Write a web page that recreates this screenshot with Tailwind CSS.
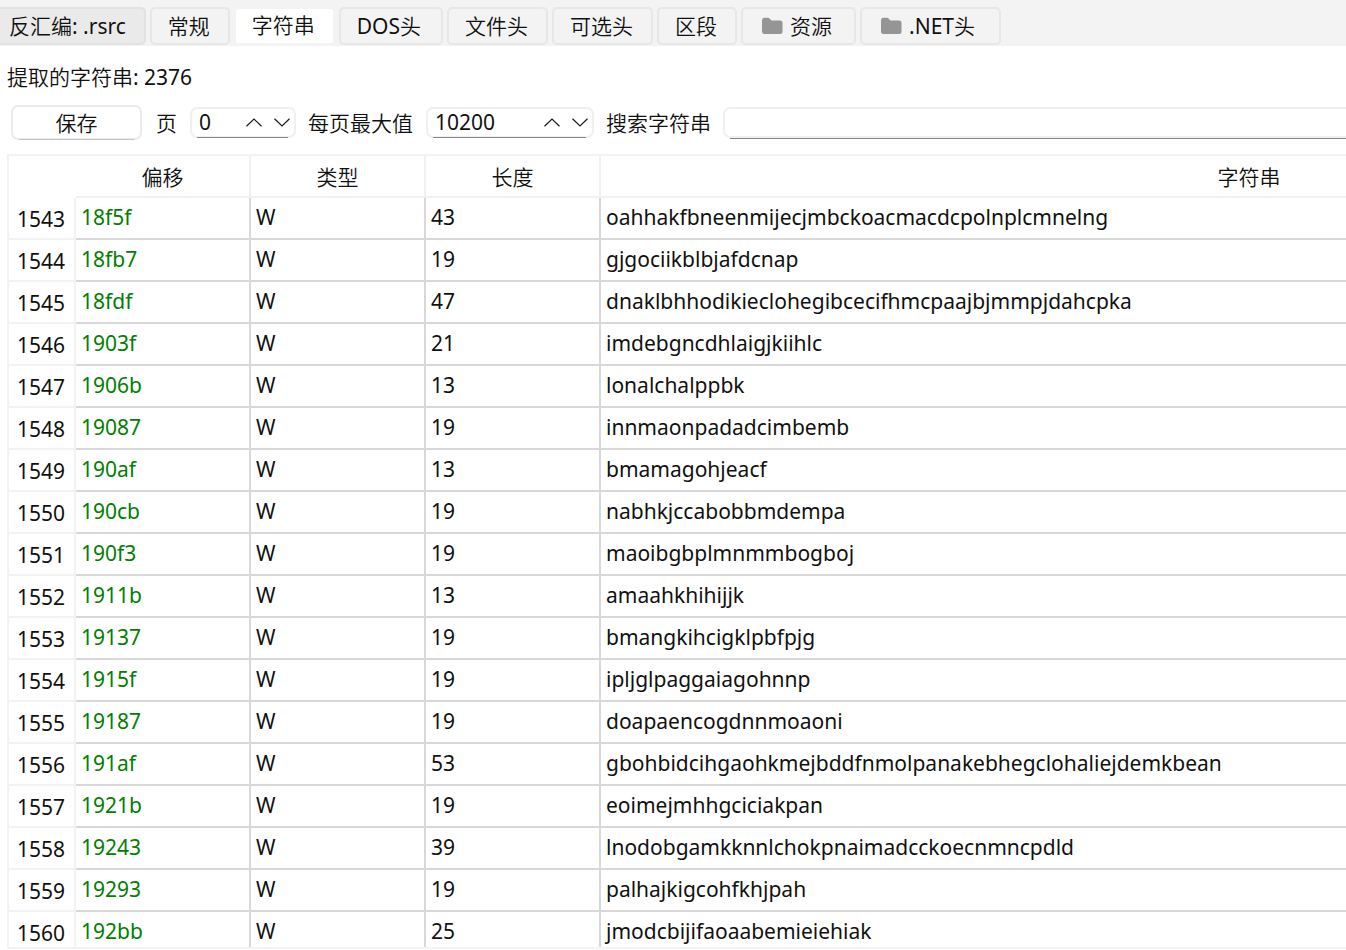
<!DOCTYPE html>
<html lang="zh-CN">
<head>
  <meta charset="UTF-8" />
  <meta name="viewport" content="width=device-width, initial-scale=1" />
  <title>字符串</title>
  <script src="https://cdn.jsdelivr.net/npm/@tailwindcss/browser@4"></script>
</head>
<body class="h-screen flex flex-col overflow-hidden bg-white text-[#111] text-[21px] leading-[30px] font-['Noto_Sans','Noto_Sans_CJK_SC',sans-serif]">

  <!-- Tabs -->
  <nav class="flex shrink-0 gap-1 bg-[#f3f3f3] pt-[7px] pb-px whitespace-nowrap">
    <button class="h-[38px] pl-[9px] pr-[18px] rounded-r-[5px] border-2 border-l-0 border-[#e2e2e2] bg-[#eaeaea]"><span class="font-[350]">反汇编</span>: .rsrc</button>
    <button class="h-[38px] pl-4 pr-[18px] rounded-[5px] border-2 border-[#e7e7e7] font-[350]">常规</button>
    <button class="h-[38px] pl-4 pr-[18px] pb-[2px] rounded-[5px] border-2 border-transparent bg-white bg-clip-padding font-[350]">字符串</button>
    <button class="h-[38px] pl-4 pr-5 rounded-[5px] border-2 border-[#e7e7e7]">DOS<span class="font-[350]">头</span></button>
    <button class="h-[38px] pl-4 pr-[18px] rounded-[5px] border-2 border-[#e7e7e7] font-[350]">文件头</button>
    <button class="h-[38px] pl-4 pr-[18px] rounded-[5px] border-2 border-[#e7e7e7] font-[350]">可选头</button>
    <button class="h-[38px] pl-4 pr-[18px] rounded-[5px] border-2 border-[#e7e7e7] font-[350]">区段</button>
    <button class="h-[38px] pl-[18px] pr-[22px] flex items-center gap-[7px] rounded-[5px] border-2 border-[#e7e7e7] font-[350]">
      <svg class="w-[22px] h-[18px]" viewBox="0 0 22 18" fill="#959595">
        <path d="M1 3.5Q1 0.800 3.500 0.800H6.500Q8 0.800 9 2L10.500 3.500H19Q21.500 3.500 21.500 6V14.500Q21.500 17 19 17H3.500Q1 17 1 14.500Z" />
      </svg>
      资源
    </button>
    <button class="h-[38px] pl-[18px] pr-6 flex items-center gap-[7px] rounded-[5px] border-2 border-[#e7e7e7]">
      <svg class="w-[22px] h-[18px]" viewBox="0 0 22 18" fill="#959595">
        <path d="M1 3.5Q1 0.800 3.500 0.800H6.500Q8 0.800 9 2L10.500 3.500H19Q21.500 3.500 21.500 6V14.500Q21.500 17 19 17H3.500Q1 17 1 14.500Z" />
      </svg>
      <span>.NET<span class="font-[350]">头</span></span>
    </button>
  </nav>

  <p class="shrink-0 pl-[7px] pt-4"><span class="font-[350]">提取的字符串</span>: 2376</p>

  <!-- Toolbar -->
  <div class="flex shrink-0 items-center pl-[11px] pt-[13px] whitespace-nowrap">
    <button class="relative w-[131px] h-[35px] shrink-0 rounded-[7px] border-2 border-[#ebebeb] flex items-center justify-center font-[350]">
      保存
      <span class="absolute left-[6px] right-[6px] -bottom-[2px] h-px bg-[#c4c4c4]"></span>
    </button>

    <label for="page" class="ml-[14px] font-[350]">页</label>
    <div class="relative ml-[13px] w-[106px] h-[31px] shrink-0 rounded-[7px] border-2 border-[#f0f0f0] flex items-center">
      <input id="page" type="number" value="0" class="w-0 flex-1 h-full pl-[7px] pb-[2px] outline-none [appearance:textfield] [&::-webkit-inner-spin-button]:appearance-none" />
      <button aria-label="增加" class="w-7 h-6 flex items-center justify-center">
        <svg class="w-4 h-[9px]" viewBox="0 0 16 9" fill="none" stroke="#1a1a1a" stroke-width="1.2"><path d="M0.500 8.200L8 1L15.500 8.200" /></svg>
      </button>
      <button aria-label="减少" class="w-7 h-6 mr-[-2px] flex items-center justify-center">
        <svg class="w-4 h-[9px]" viewBox="0 0 16 9" fill="none" stroke="#1a1a1a" stroke-width="1.2"><path d="M0.500 0.800L8 8L15.500 0.800" /></svg>
      </button>
      <span class="absolute left-[5px] right-[6px] -bottom-[2px] h-px bg-[#868686]"></span>
    </div>

    <label for="perPage" class="ml-3 font-[350]">每页最大值</label>
    <div class="relative ml-[13px] w-[168px] h-[31px] shrink-0 rounded-[7px] border-2 border-[#f0f0f0] flex items-center">
      <input id="perPage" type="number" value="10200" class="w-0 flex-1 h-full pl-[7px] pb-[2px] outline-none [appearance:textfield] [&::-webkit-inner-spin-button]:appearance-none" />
      <button aria-label="增加" class="w-7 h-6 flex items-center justify-center">
        <svg class="w-4 h-[9px]" viewBox="0 0 16 9" fill="none" stroke="#1a1a1a" stroke-width="1.2"><path d="M0.500 8.200L8 1L15.500 8.200" /></svg>
      </button>
      <button aria-label="减少" class="w-7 h-6 mr-[-2px] flex items-center justify-center">
        <svg class="w-4 h-[9px]" viewBox="0 0 16 9" fill="none" stroke="#1a1a1a" stroke-width="1.2"><path d="M0.500 0.800L8 8L15.500 0.800" /></svg>
      </button>
      <span class="absolute left-[5px] right-[6px] -bottom-[2px] h-px bg-[#868686]"></span>
    </div>

    <label for="search" class="ml-3 font-[350]">搜索字符串</label>
    <div class="relative ml-3 flex-1 h-[31px] rounded-l-[7px] border-2 border-r-0 border-[#f0f0f0]">
      <input id="search" type="text" class="w-full h-full px-2 outline-none" />
      <span class="absolute left-[5px] right-0 -bottom-[3px] h-px bg-[#868686]"></span>
    </div>
  </div>

  <!-- Strings table, runs past the right edge of the window -->
  <div class="flex-1 min-h-0 mt-[14px] ml-[7px] mb-px overflow-hidden border-2 border-r-0 border-[#f3f3f3]">
    <table class="table-fixed w-[1888px] border-separate border-spacing-0 text-left whitespace-nowrap">
      <colgroup>
        <col class="w-[67px]" />
        <col class="w-[175px]" />
        <col class="w-[175px]" />
        <col class="w-[175px]" />
        <col />
      </colgroup>
      <thead>
        <tr class="h-[42px] text-center">
          <td></td>
          <th class="p-0 pt-[2px] font-[350] border-r-2 border-b-2 border-[#f1f1f1]">偏移</th>
          <th class="p-0 pt-[2px] font-[350] border-r-2 border-b-2 border-[#f1f1f1]">类型</th>
          <th class="p-0 pt-[2px] font-[350] border-r-2 border-b-2 border-[#f1f1f1]">长度</th>
          <th class="p-0 pt-[2px] font-[350] border-b-2 border-[#f1f1f1]">字符串</th>
        </tr>
      </thead>
      <tbody id="rows"></tbody>
    </table>
  </div>

  <script>
    const firstRow = 1543;
    const strings = [
      ["18f5f", "W", 43, "oahhakfbneenmijecjmbckoacmacdcpolnplcmnelng"],
      ["18fb7", "W", 19, "gjgociikblbjafdcnap"],
      ["18fdf", "W", 47, "dnaklbhhodikieclohegibcecifhmcpaajbjmmpjdahcpka"],
      ["1903f", "W", 21, "imdebgncdhlaigjkiihlc"],
      ["1906b", "W", 13, "lonalchalppbk"],
      ["19087", "W", 19, "innmaonpadadcimbemb"],
      ["190af", "W", 13, "bmamagohjeacf"],
      ["190cb", "W", 19, "nabhkjccabobbmdempa"],
      ["190f3", "W", 19, "maoibgbplmnmmbogboj"],
      ["1911b", "W", 13, "amaahkhihijjk"],
      ["19137", "W", 19, "bmangkihcigklpbfpjg"],
      ["1915f", "W", 19, "ipljglpaggaiagohnnp"],
      ["19187", "W", 19, "doapaencogdnnmoaoni"],
      ["191af", "W", 53, "gbohbidcihgaohkmejbddfnmolpanakebhegclohaliejdemkbean"],
      ["1921b", "W", 19, "eoimejmhhgciciakpan"],
      ["19243", "W", 39, "lnodobgamkknnlchokpnaimadcckoecnmncpdld"],
      ["19293", "W", 19, "palhajkigcohfkhjpah"],
      ["192bb", "W", 25, "jmodcbijifaoaabemieiehiak"]
    ];

    document.getElementById("rows").innerHTML = strings.map(([offset, type, length, text], i) => `
      <tr class="h-[42px]">
        <th class="p-0 pt-[2px] pl-2 font-normal border-r-2 border-b-2 border-[#f3f3f3]">${firstRow + i}</th>
        <td class="p-0 pb-[2px] pl-[5px] text-[#008000] border-r-2 border-b-2 border-[#d8d8d8]">${offset}</td>
        <td class="p-0 pb-[2px] pl-[5px] border-r-2 border-b-2 border-[#d8d8d8]">${type}</td>
        <td class="p-0 pb-[2px] pl-[5px] border-r-2 border-b-2 border-[#d8d8d8]">${length}</td>
        <td class="p-0 pb-[2px] pl-[5px] border-b-2 border-[#d8d8d8]">${text}</td>
      </tr>`).join("");
  </script>

</body>
</html>
